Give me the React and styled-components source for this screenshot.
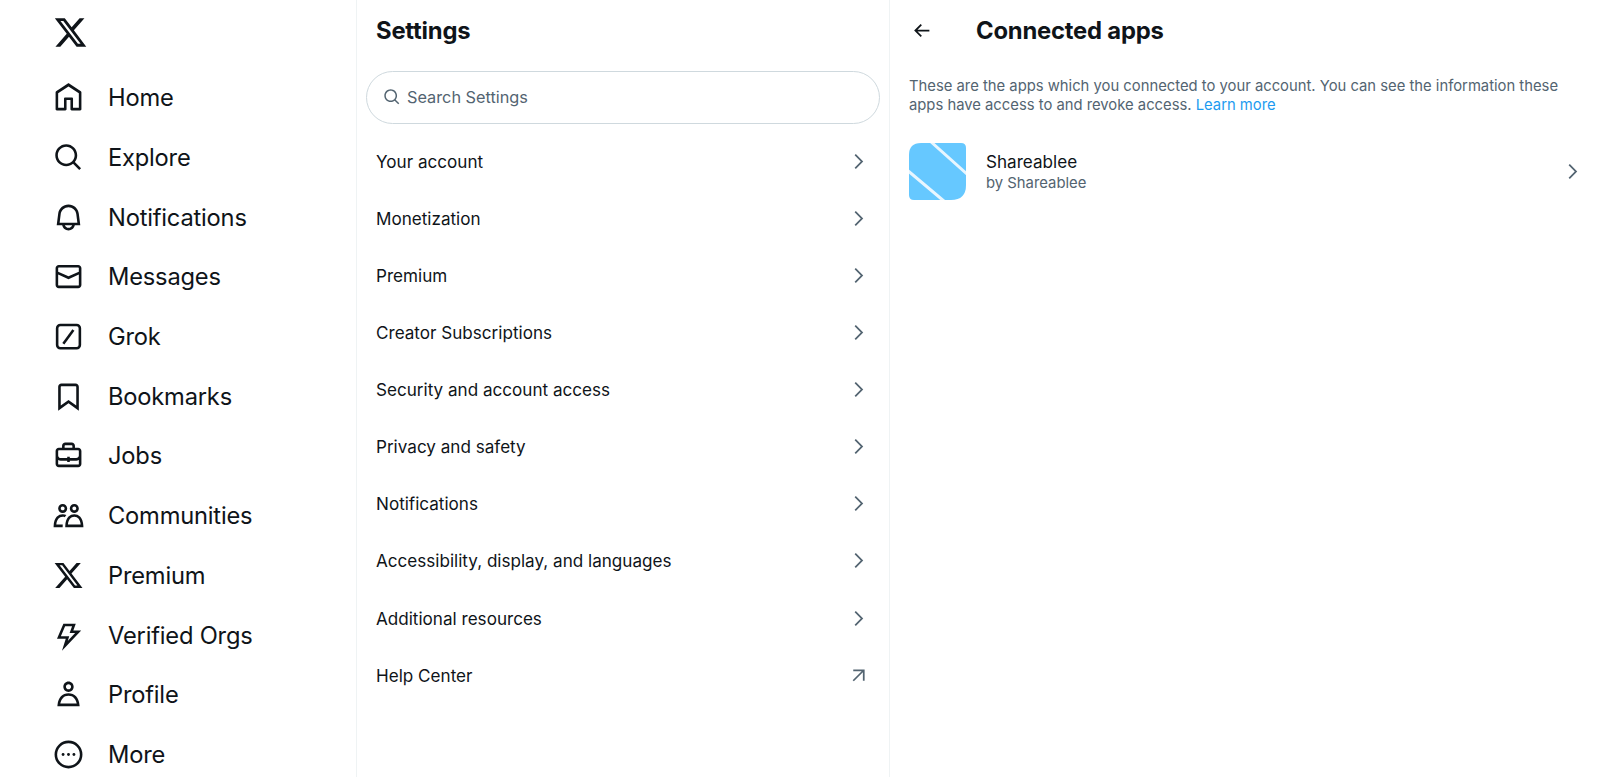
import React from 'react';
import styled, { createGlobalStyle } from 'styled-components';

const GlobalStyle = createGlobalStyle`
    html, body {
        margin: 0;
        padding: 0;
        height: 100%;
        background: #fff;
        overflow: hidden;
    }
    body {
        font-family: Inter, "Liberation Sans", sans-serif;
        color: #0f1419;
    }
`;

const Page = styled.div`
    display: flex;
    width: 1600px;
    height: 777px;
    overflow: hidden;
`;

const Sidebar = styled.nav`
    width: 303px;
    flex-shrink: 0;
    padding-left: 53px;
    border-right: 1px solid #eff3f4;
`;

const LogoRow = styled.div`
    height: 68px;
    display: flex;
    align-items: center;
    padding-bottom: 4px;
    box-sizing: border-box;

    svg {
        width: 35px;
        height: 35px;
        display: block;
    }
`;

const NavItem = styled.div`
    height: 59.7px;
    display: flex;
    align-items: center;
    gap: 24px;
    font-size: 23.7px;
    letter-spacing: -0.2px;
    color: #0f1419;
`;

const NavIcon = styled.svg`
    width: 31px;
    height: 31px;
    flex-shrink: 0;
    fill: #0f1419;
`;

const SettingsColumn = styled.section`
    width: 532px;
    flex-shrink: 0;
    border-right: 1px solid #eff3f4;
`;

const ColumnHeader = styled.div`
    height: 61px;
    display: flex;
    align-items: center;
    padding-left: 19px;
`;

const Title = styled.h1`
    margin: 0;
    font-size: 23.8px;
    font-weight: 700;
    letter-spacing: -0.2px;
    color: #0f1419;
`;

const SearchBox = styled.div`
    margin: 10px 9px 9px 9px;
    height: 53px;
    box-sizing: border-box;
    border: 1.5px solid #cfd9de;
    border-radius: 27px;
    display: flex;
    align-items: center;
    gap: 6px;
    padding: 0 0 1px 16px;
    font-size: 16.3px;
    line-height: 20px;
    color: #536471;

    svg {
        width: 18px;
        height: 18px;
        fill: #536471;
    }
`;

const SettingsRow = styled.div`
    height: 57.07px;
    display: flex;
    align-items: center;
    justify-content: space-between;
    padding: 0 20px 0 19px;
    font-size: 17.1px;
    color: #0f1419;
`;

const RowIcon = styled.svg`
    width: 21px;
    height: 21px;
    flex-shrink: 0;
    fill: #536471;
`;

const DetailColumn = styled.section`
    flex: 1;
    min-width: 0;
`;

const DetailHeader = styled.div`
    height: 61px;
    display: flex;
    align-items: center;
    padding-left: 21px;
    gap: 44px;

    svg {
        width: 21px;
        height: 21px;
        fill: #0f1419;
    }
`;

const Description = styled.p`
    margin: 16px 19px 0 19px;
    font-size: 14.8px;
    line-height: 19.4px;
    color: #536471;
`;

const LearnMore = styled.span`
    color: #1d9bf0;
`;

const AppRow = styled.div`
    margin-top: 27px;
    display: flex;
    align-items: center;
    padding: 0 17px 0 19px;
`;

const AppLogo = styled.svg`
    width: 57px;
    height: 57px;
    flex-shrink: 0;
    margin-right: 20px;
`;

const AppText = styled.div`
    flex: 1;
    padding-top: 3px;
`;

const AppName = styled.div`
    font-size: 17.1px;
    line-height: 22px;
    color: #0f1419;
`;

const AppAuthor = styled.div`
    font-size: 14.85px;
    line-height: 21px;
    color: #536471;
`;

const xPath = 'M18.244 2.25h3.308l-7.227 8.26 8.502 11.24H16.17l-5.214-6.817L4.99 21.75H1.68l7.73-8.835L1.254 2.25H8.08l4.713 6.231zm-1.161 17.52h1.833L7.084 4.126H5.117z';
const chevronPath = 'M14.586 12L7.543 4.96l1.414-1.42L17.414 12l-8.457 8.46-1.414-1.42L14.586 12z';
const searchPath = 'M10.25 3.75c-3.59 0-6.5 2.91-6.5 6.5s2.91 6.5 6.5 6.5c1.795 0 3.419-.726 4.596-1.904 1.178-1.177 1.904-2.801 1.904-4.596 0-3.59-2.91-6.5-6.5-6.5zm-8.5 6.5c0-4.694 3.806-8.5 8.5-8.5s8.5 3.806 8.5 8.5c0 1.986-.682 3.815-1.824 5.262l4.781 4.781-1.414 1.414-4.781-4.781c-1.447 1.142-3.276 1.824-5.262 1.824-4.694 0-8.5-3.806-8.5-8.5z';

const navItems = [
    { label: 'Home', icon: <path d="M21.591 7.146L12.52 1.157c-.316-.21-.724-.21-1.04 0l-9.071 5.99c-.26.173-.409.456-.409.757v13.183c0 .502.418.913.929.913h6.638c.511 0 .929-.41.929-.913v-7.075h3.008v7.075c0 .502.418.913.929.913h6.639c.51 0 .928-.41.928-.913V7.904c0-.301-.158-.584-.408-.758zM20 20l-4.5.01.011-7.097c0-.502-.418-.913-.928-.913H9.44c-.511 0-.929.41-.929.913L8.5 20H4V8.773l8.011-5.342L20 8.764z" /> },
    { label: 'Explore', icon: <path d={searchPath} /> },
    { label: 'Notifications', icon: <path d="M19.993 9.042C19.48 5.017 16.054 2 11.996 2s-7.49 3.021-7.999 7.051L2.866 18H7.1c.463 2.282 2.481 4 4.9 4s4.437-1.718 4.9-4h4.236l-1.143-8.958zM12 20c-1.306 0-2.417-.835-2.829-2h5.658c-.412 1.165-1.523 2-2.829 2zm-6.866-4l.847-6.698C6.364 6.272 8.941 4 11.996 4s5.627 2.268 6.013 5.295L18.864 16H5.134z" /> },
    { label: 'Messages', icon: <path d="M1.998 5.5c0-1.381 1.119-2.5 2.5-2.5h15c1.381 0 2.5 1.119 2.5 2.5v13c0 1.381-1.119 2.5-2.5 2.5h-15c-1.381 0-2.5-1.119-2.5-2.5v-13zm2.5-.5c-.276 0-.5.224-.5.5v2.764l8 3.638 8-3.636V5.5c0-.276-.224-.5-.5-.5h-15zm15.5 5.463l-8 3.636-8-3.638V18.5c0 .276.224.5.5.5h15c.276 0 .5-.224.5-.5v-8.037z" /> },
    { label: 'Grok', icon: (
        <>
            <rect x="3.2" y="3.1" width="17.6" height="18" rx="2.5" fill="none" stroke="#0f1419" strokeWidth="2" />
            <path d="M8 17.6L15.8 7" fill="none" stroke="#0f1419" strokeWidth="2" />
        </>
    ) },
    { label: 'Bookmarks', icon: <path d="M4 4.5C4 3.12 5.119 2 6.5 2h11C18.881 2 20 3.12 20 4.5v18.44l-8-5.71-8 5.71V4.5zM6.5 4c-.276 0-.5.22-.5.5v14.56l6-4.29 6 4.29V4.5c0-.28-.224-.5-.5-.5h-11z" /> },
    { label: 'Jobs', icon: <path d="M19.5 6H17V4.5C17 3.12 15.88 2 14.5 2h-5C8.12 2 7 3.12 7 4.5V6H4.5C3.12 6 2 7.12 2 8.5v10C2 19.88 3.12 21 4.5 21h15c1.38 0 2.5-1.12 2.5-2.5v-10C22 7.12 20.88 6 19.5 6zM9 4.5c0-.28.23-.5.5-.5h5c.28 0 .5.22.5.5V6H9V4.5zm11 14c0 .28-.22.5-.5.5h-15c-.27 0-.5-.22-.5-.5v-3.04c.59.35 1.27.54 2 .54h5v1h2v-1h5c.73 0 1.41-.19 2-.54v3.04zm0-6.49c0 1.1-.9 1.99-2 1.99h-5v-1h-2v1H6c-1.1 0-2-.9-2-2V8.5c0-.28.23-.5.5-.5h15c.28 0 .5.22.5.5v3.51z" /> },
    { label: 'Communities', icon: <path d="M7.501 19.917L7.471 21H.472l.029-1.027c.184-6.618 3.736-8.977 7-8.977.963 0 1.95.212 2.87.672-.444.478-.851 1.03-1.212 1.656-.507-.204-1.054-.329-1.658-.329-2.767 0-4.57 2.223-4.938 6.004H7.56c-.023.302-.05.599-.059.917zm15.998.056L23.528 21H9.472l.029-1.027c.184-6.618 3.736-8.977 7-8.977s6.816 2.358 7 8.977zM21.437 19c-.367-3.781-2.17-6.004-4.938-6.004s-4.57 2.223-4.938 6.004h9.875zm-4.938-9c-.799 0-1.527-.279-2.116-.73-.836-.64-1.384-1.638-1.384-2.77 0-1.93 1.567-3.5 3.5-3.5s3.5 1.57 3.5 3.5c0 1.132-.548 2.13-1.384 2.77-.589.451-1.317.73-2.116.73zm-1.5-3.5c0 .827.673 1.5 1.5 1.5s1.5-.673 1.5-1.5-.673-1.5-1.5-1.5-1.5.673-1.5 1.5zM7.5 3C9.433 3 11 4.57 11 6.5S9.433 10 7.5 10 4 8.43 4 6.5 5.567 3 7.5 3zm0 2C6.673 5 6 5.673 6 6.5S6.673 8 7.5 8 9 7.327 9 6.5 8.327 5 7.5 5z" /> },
    { label: 'Premium', icon: <path d={xPath} /> },
    { label: 'Verified Orgs', icon: <path d="M8.7 3.9H16.2L14.3 9.1H19.5L9.2 20L11.2 13.6H4.6z" fill="none" stroke="#0f1419" strokeWidth="2" strokeMiterlimit="10" /> },
    { label: 'Profile', icon: <path d="M5.651 19h12.698c-.337-1.8-1.023-3.21-1.945-4.19C15.318 13.65 13.838 13 12 13s-3.317.65-4.404 1.81c-.922.98-1.608 2.39-1.945 4.19zm.486-5.56C7.627 11.85 9.648 11 12 11s4.373.85 5.863 2.44c1.477 1.58 2.366 3.8 2.632 6.46l.11 1.1H3.395l.11-1.1c.266-2.66 1.155-4.88 2.632-6.46zM12 4c-1.105 0-2 .9-2 2s.895 2 2 2 2-.9 2-2-.895-2-2-2zM8 6c0-2.21 1.791-4 4-4s4 1.79 4 4-1.791 4-4 4-4-1.79-4-4z" /> },
    { label: 'More', icon: (
        <>
            <circle cx="12" cy="12" r="9.8" fill="none" stroke="#0f1419" strokeWidth="2" />
            <circle cx="7.8" cy="12" r="1.1" />
            <circle cx="12" cy="12" r="1.1" />
            <circle cx="16.2" cy="12" r="1.1" />
        </>
    ) },
];

const settingsItems = [
    'Your account',
    'Monetization',
    'Premium',
    'Creator Subscriptions',
    'Security and account access',
    'Privacy and safety',
    'Notifications',
    'Accessibility, display, and languages',
    'Additional resources',
];

const Chevron = () => (
    <RowIcon viewBox="0 0 24 24"><path d={chevronPath} /></RowIcon>
);

const App = () => {
    return (
        <Page>
            <GlobalStyle />
            <Sidebar>
                <LogoRow>
                    <svg viewBox="0 0 24 24" fill="#0f1419"><path d={xPath} /></svg>
                </LogoRow>
                {navItems.map(item => (
                    <NavItem key={item.label}>
                        <NavIcon viewBox="0 0 24 24">{item.icon}</NavIcon>
                        <span>{item.label}</span>
                    </NavItem>
                ))}
            </Sidebar>
            <SettingsColumn>
                <ColumnHeader>
                    <Title>Settings</Title>
                </ColumnHeader>
                <SearchBox>
                    <svg viewBox="0 0 24 24"><path d={searchPath} /></svg>
                    <span>Search Settings</span>
                </SearchBox>
                {settingsItems.map(label => (
                    <SettingsRow key={label}>
                        <span>{label}</span>
                        <Chevron />
                    </SettingsRow>
                ))}
                <SettingsRow>
                    <span>Help Center</span>
                    <RowIcon viewBox="0 0 24 24"><path d="M6 5h13v13h-2V8.41L6.7 18.7l-1.4-1.4L15.59 7H6z" /></RowIcon>
                </SettingsRow>
            </SettingsColumn>
            <DetailColumn>
                <DetailHeader>
                    <svg viewBox="0 0 24 24"><path d="M7.414 13l5.043 5.04-1.414 1.42L3.586 12l7.457-7.46 1.414 1.42L7.414 11H21v2H7.414z" /></svg>
                    <Title>Connected apps</Title>
                </DetailHeader>
                <Description>
                    These are the apps which you connected to your account. You can see the information these apps have access to and revoke access. <LearnMore>Learn more</LearnMore>
                </Description>
                <AppRow>
                    <AppLogo viewBox="0 0 57 57">
                        <defs>
                            <filter id="soften" x="-10%" y="-10%" width="120%" height="120%">
                                <feGaussianBlur stdDeviation="0.5" />
                            </filter>
                        </defs>
                        <g filter="url(#soften)">
                            <path d="M12 0H52Q57 0 57 5V42Q57 57 42 57H5Q0 57 0 52V12Q0 0 12 0z" fill="#66c8ff" />
                            <path d="M21 -2L59 32M-2 27L36 59" stroke="#e8f6ff" strokeWidth="3" fill="none" />
                        </g>
                    </AppLogo>
                    <AppText>
                        <AppName>Shareablee</AppName>
                        <AppAuthor>by Shareablee</AppAuthor>
                    </AppText>
                    <Chevron />
                </AppRow>
            </DetailColumn>
        </Page>
    )
}

export default App;
